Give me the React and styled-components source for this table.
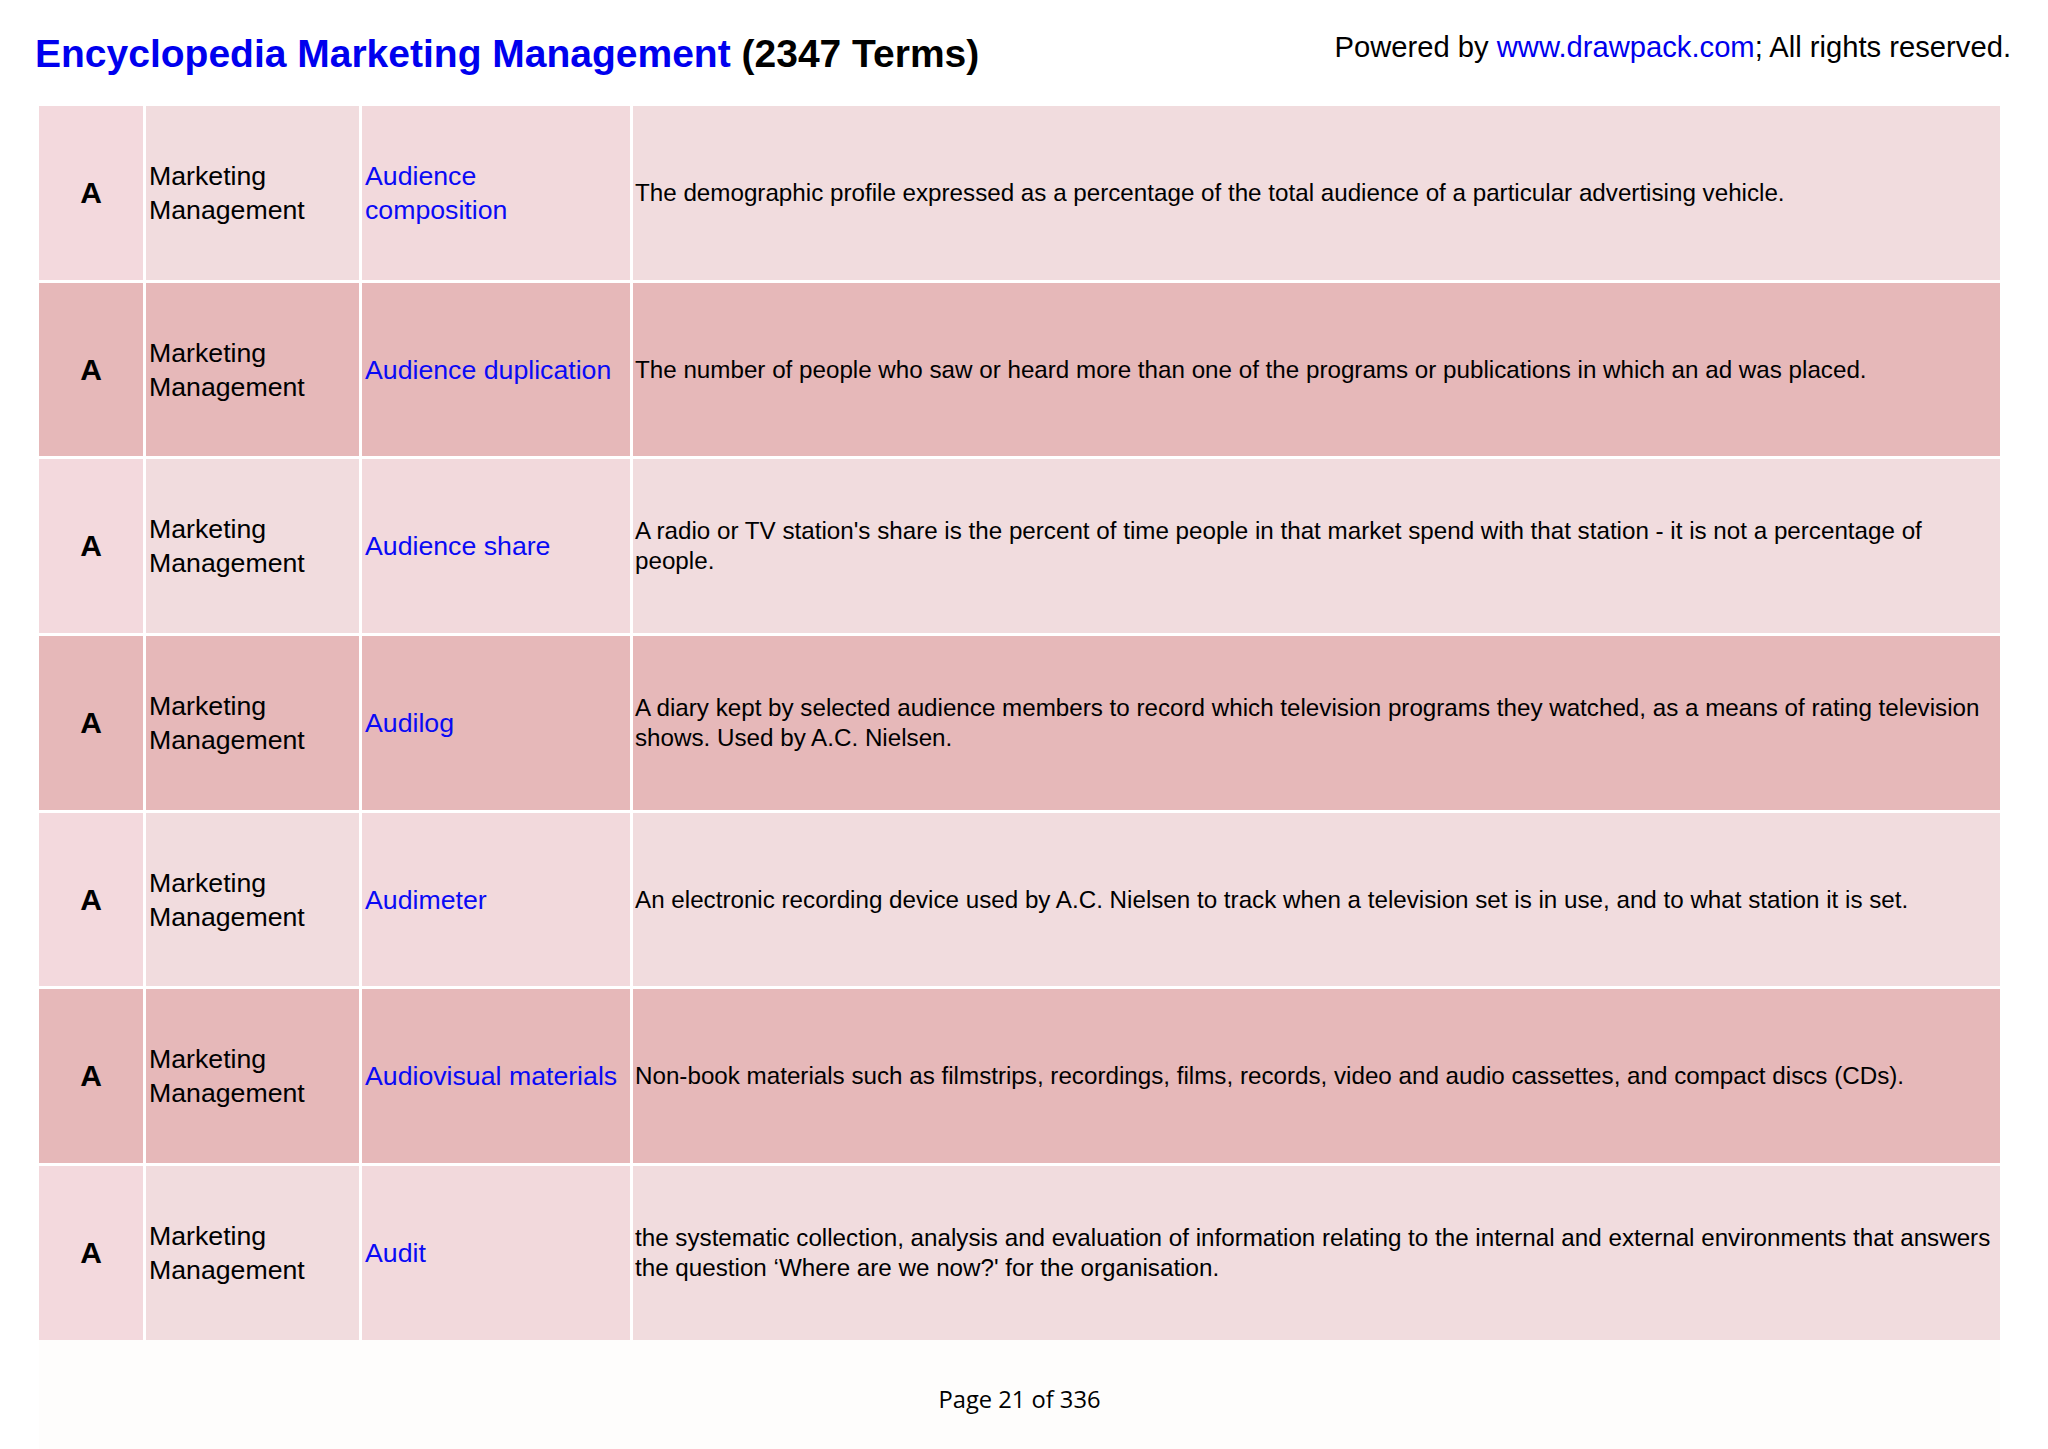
import React from 'react'
import styled, { createGlobalStyle } from 'styled-components'

const GlobalStyle = createGlobalStyle`
  html, body {
    margin: 0;
    padding: 0;
    background: #ffffff;
  }
  body {
    font-family: "Liberation Sans", Arial, sans-serif;
    color: #000000;
  }
`

const Page = styled.div`
  width: 2048px;
  height: 1449px;
  display: flex;
  flex-direction: column;
`

const Header = styled.div`
  display: flex;
  justify-content: space-between;
  align-items: flex-start;
  height: 106px;
  padding: 0 37px 0 35px;
  box-sizing: border-box;
`

const Title = styled.h1`
  margin: 30px 0 0;
  font-size: 39px;
  line-height: 48px;
  font-weight: bold;
  color: #000000;
  span {
    color: #0000ee;
  }
`

const Powered = styled.div`
  margin-top: 28px;
  font-size: 29.2px;
  line-height: 38px;
  a {
    color: #0000ee;
    text-decoration: none;
  }
`

const Table = styled.div`
  display: grid;
  grid-template-columns: 104px 213px 268px 1fr;
  grid-auto-rows: 173.7px;
  gap: 3px;
  margin: 0 48px 0 39px;
  background: #ffffff;
`

const Cell = styled.div`
  display: flex;
  align-items: center;
  padding: 0 4px 0 3px;
  background: ${props => props.dark ? '#e6b8b9' : '#f1dcde'};
  font-size: 26.7px;
  line-height: 34px;
`

const Letter = styled(Cell)`
  justify-content: center;
  padding: 0;
  font-weight: bold;
  font-size: 30px;
  background: ${props => props.dark ? '#e6b8b9' : '#f3d9dd'};
`

const Term = styled(Cell)`
  padding-right: 8px;
  color: #0a0af5;
  background: ${props => props.dark ? '#e6b8b9' : '#f2d9dc'};
`

const Desc = styled(Cell)`
  font-size: 24.2px;
  line-height: 30px;
  padding: 0 6px 0 2px;
`

const Footer = styled.div`
  flex: 1;
  margin: 0 48px 0 39px;
  display: flex;
  justify-content: center;
  padding-top: 43px;
  background: #fefdfc;
  font-family: "Open Sans", sans-serif;
  font-size: 23.7px;
`

const rows = [
  ['Audience composition', 'The demographic profile expressed as a percentage of the total audience of a particular advertising vehicle.'],
  ['Audience duplication', 'The number of people who saw or heard more than one of the programs or publications in which an ad was placed.'],
  ['Audience share', "A radio or TV station's share is the percent of time people in that market spend with that station - it is not a percentage of people."],
  ['Audilog', 'A diary kept by selected audience members to record which television programs they watched, as a means of rating television shows. Used by A.C. Nielsen.'],
  ['Audimeter', 'An electronic recording device used by A.C. Nielsen to track when a television set is in use, and to what station it is set.'],
  ['Audiovisual materials', 'Non-book materials such as filmstrips, recordings, films, records, video and audio cassettes, and compact discs (CDs).'],
  ['Audit', "the systematic collection, analysis and evaluation of information relating to the internal and external environments that answers the question \u2018Where are we now?' for the organisation."],
]

const App = () => {
  return (
    <Page>
      <GlobalStyle />
      <Header>
        <Title><span>Encyclopedia Marketing Management</span> (2347 Terms)</Title>
        <Powered>Powered by <a href="#">www.drawpack.com</a>; All rights reserved.</Powered>
      </Header>
      <Table>
        {rows.map(([term, desc], i) => {
          const dark = i % 2 === 1
          return (
            <React.Fragment key={term}>
              <Letter dark={dark}>A</Letter>
              <Cell dark={dark}>Marketing<br />Management</Cell>
              <Term dark={dark}>{term}</Term>
              <Desc dark={dark}>{desc}</Desc>
            </React.Fragment>
          )
        })}
      </Table>
      <Footer>Page 21 of 336</Footer>
    </Page>
  )
}

export default App
